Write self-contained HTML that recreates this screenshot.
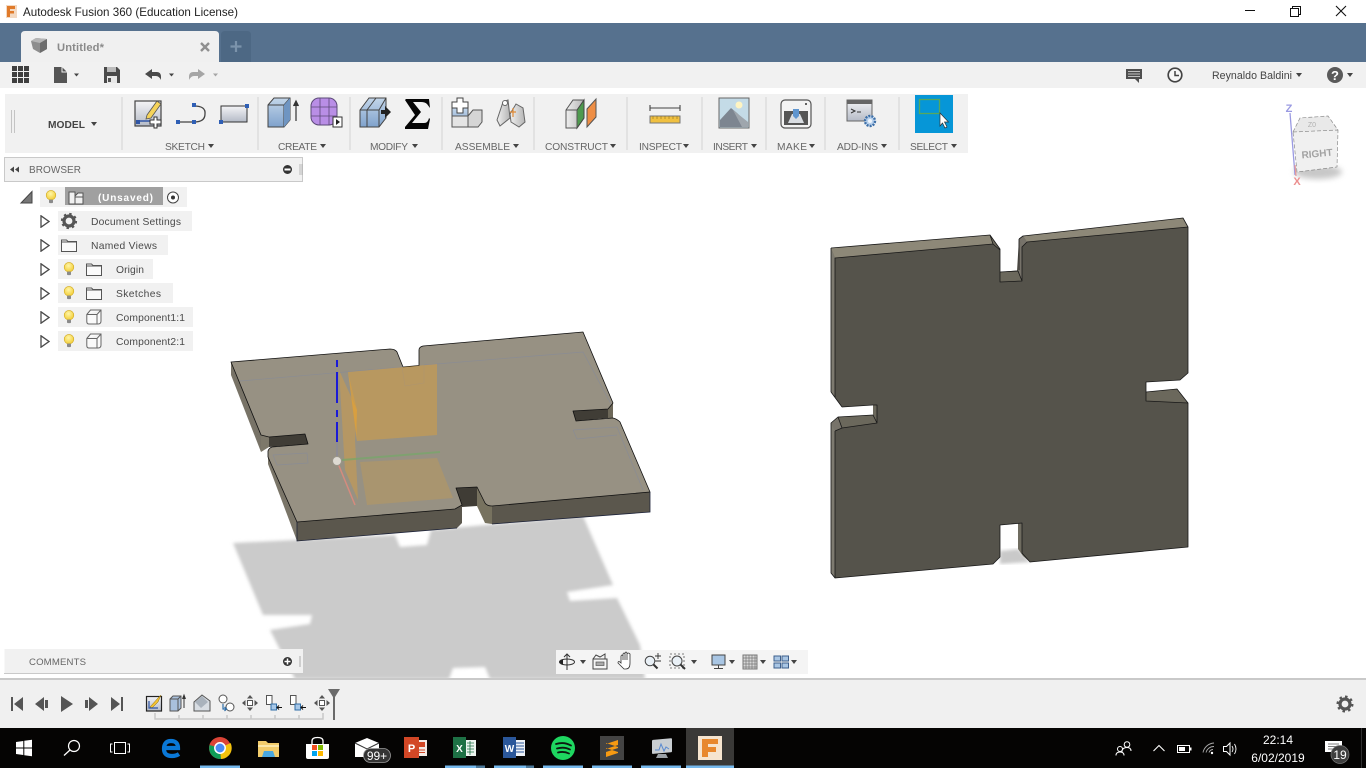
<!DOCTYPE html>
<html lang="en">
<head>
<meta charset="utf-8">
<title>Autodesk Fusion 360</title>
<style>
html,body{margin:0;padding:0;background:#fff;width:1366px;height:768px;overflow:hidden}
svg{display:block;position:absolute;left:0;top:0}
text{font-family:"Liberation Sans",Arial,sans-serif;fill:#555}
</style>
</head>
<body>
<svg width="1366" height="768" viewBox="0 0 1366 768" xmlns="http://www.w3.org/2000/svg">
<defs>
<filter id="b1" x="-5%" y="-5%" width="110%" height="110%"><feGaussianBlur stdDeviation="1.6"/></filter>
<filter id="b2" x="-30%" y="-30%" width="160%" height="160%"><feGaussianBlur stdDeviation="3"/></filter>
<linearGradient id="gw" x1="0" y1="0" x2="0" y2="1"><stop offset="0" stop-color="#f4f4f6"/><stop offset="1" stop-color="#b4bac6"/></linearGradient>
<linearGradient id="gb" x1="0" y1="0" x2="0" y2="1"><stop offset="0" stop-color="#c3d6ea"/><stop offset="1" stop-color="#7fa2cc"/></linearGradient>
<linearGradient id="gg" x1="0" y1="0" x2="1" y2="0"><stop offset="0" stop-color="#efefef"/><stop offset="1" stop-color="#b5b5b5"/></linearGradient>
<radialGradient id="gy" cx=".45" cy=".35" r=".7"><stop offset="0" stop-color="#fff6a8"/><stop offset="1" stop-color="#f1c92b"/></radialGradient>
<symbol id="bulb" viewBox="0 0 12 14" width="12" height="14">
<circle cx="6" cy="5.2" r="4.8" fill="url(#gy)" stroke="#d0a820" stroke-width=".6"/>
<rect x="4" y="9.5" width="4" height="3.6" rx="1" fill="#8a8a8a"/>
</symbol>
<symbol id="exp" viewBox="0 0 10 13" width="10" height="13">
<path d="M1 .8 L9 6.5 L1 12.2 Z" fill="#fff" stroke="#4a4a4a" stroke-width="1.3"/>
</symbol>
<symbol id="folder" viewBox="0 0 16 13" width="16" height="13">
<path d="M.5 12.5 V1 H5.5 L7 2.5 H15.5 V12.5 Z M.5 3 H15.5" fill="#fafafa" stroke="#555" stroke-width="1"/>
</symbol>
<symbol id="comp" viewBox="0 0 16 16" width="16" height="16">
<path d="M.8 5.5 L4.5 1 H15 V12 Q15 15 12 15 H3 Q.8 15 .8 12.5 Z M.8 5.5 H11 L15 1 M11 5.5 V15" fill="#fafafa" stroke="#666" stroke-width="1"/>
</symbol>
<symbol id="mv" viewBox="0 0 16 16" width="16" height="16">
<g fill="#555"><path d="M8 0 L11 3.5 H5 Z M8 16 L11 12.5 H5 Z M0 8 L3.5 5 V11 Z M16 8 L12.5 5 V11 Z"/></g>
<rect x="5.5" y="5.5" width="5" height="5" fill="#fff" stroke="#555" stroke-width="1"/>
</symbol>
<symbol id="join" viewBox="0 0 16 16" width="16" height="16">
<rect x=".5" y=".5" width="5.5" height="9" fill="#fff" stroke="#555"/>
<rect x="5" y="9" width="5.5" height="6" fill="#a8c8e8" stroke="#2f6ea8"/>
<path d="M16 12.5 H11 M13 10.5 L11 12.5 L13 14.5" stroke="#111" fill="none"/>
</symbol>
</defs>

<!-- Title bar -->
<rect width="1366" height="23" fill="#fff"/>
<rect x="6" y="5" width="11" height="13" fill="#f3d9c2"/>
<path d="M7 6 H15 V9 H10 V11 H14 V13.500 H10 V17 H7 Z" fill="#e07a2a"/>
<text x="23" y="16" font-size="11.600" style="fill:#222" textLength="215">Autodesk Fusion 360 (Education License)</text>
<path d="M1245 10.500 H1255" stroke="#111"/>
<path d="M1290.500 8.500 H1298.500 V16.500 H1290.500 Z M1292.500 8.500 V6.500 H1300.500 V14.500 H1298.500" fill="none" stroke="#111"/>
<path d="M1336 6 L1346 16 M1346 6 L1336 16" stroke="#111" stroke-width="1.100"/>

<!-- Tab strip -->
<rect y="23" width="1366" height="39" fill="#56718e"/>
<path d="M21 62 V35 Q21 31 25 31 H215 Q219 31 219 35 V62 Z" fill="#f0f0f0"/>
<path d="M221 62 V35 Q221 31 225 31 H247 Q251 31 251 35 V62 Z" fill="#4d6884"/>
<path d="M236 41 V52 M230.500 46.500 H241.500" stroke="#7b93ab" stroke-width="2.200"/>
<path d="M31 41 L36 38 L47 39 L47 49 L40 53 L33 49 Z" fill="#8d8d8d"/>
<path d="M31 41 L40 43 L47 39 L36 38 Z" fill="#b5b5b5"/>
<path d="M40 43 V53 L47 49 V39 Z" fill="#6d6d6d"/>
<text x="57" y="51" font-size="11.200" font-weight="bold" style="fill:#8a8a8a" textLength="47">Untitled*</text>
<path d="M201 43 L209 51 M209 43 L201 51" stroke="#8f8f8f" stroke-width="2.400"/>

<!-- Quick access row -->
<rect y="62" width="1366" height="26" fill="#f1f1f1"/>
<g fill="#3f3f3f">
<rect x="12" y="66" width="5" height="5"/><rect x="18" y="66" width="5" height="5"/><rect x="24" y="66" width="5" height="5"/>
<rect x="12" y="72" width="5" height="5"/><rect x="18" y="72" width="5" height="5"/><rect x="24" y="72" width="5" height="5"/>
<rect x="12" y="78" width="5" height="5"/><rect x="18" y="78" width="5" height="5"/><rect x="24" y="78" width="5" height="5"/>
</g>
<path d="M54 67 H62 L67 72 V83 H54 Z" fill="#555"/><path d="M62 67 V72 H67" fill="none" stroke="#f1f1f1"/>
<path d="M74 73.500 H79 L76.500 76.500 Z" fill="#444"/>
<path d="M104 67 H117 L120 70 V83 H104 Z" fill="#4a4a4a"/><rect x="107" y="67" width="9" height="5" fill="#bbb"/><rect x="107" y="76" width="10" height="7" fill="#e8e8e8"/><rect x="108" y="78" width="3" height="4" fill="#555"/>
<path d="M145 74 L152 69 V72 H157 Q161 72 161 77 V80 Q159 76 156 76 H152 V79 Z" fill="#4a4a4a"/>
<path d="M169 73.500 H174 L171.500 76.500 Z" fill="#444"/>
<path d="M205 74 L198 69 V72 H193 Q189 72 189 77 V80 Q191 76 194 76 H198 V79 Z" fill="#a5a5a5"/>
<path d="M213 73.500 H218 L215.500 76.500 Z" fill="#a5a5a5"/>
<path d="M1126 69 H1142 V79 H1139 V83 L1135 79 H1126 Z" fill="#4f4f4f"/><path d="M1128 71.500 H1140 M1128 74 H1140 M1128 76.500 H1140" stroke="#e6e6e6" stroke-width=".8"/>
<circle cx="1175" cy="75" r="6.800" fill="#f8f8f8" stroke="#444" stroke-width="1.700"/><path d="M1175 71 V75.500 H1179" fill="none" stroke="#444" stroke-width="1.500"/>
<text x="1212" y="79" font-size="10.600" textLength="80" style="fill:#444">Reynaldo Baldini</text>
<path d="M1296 73 H1302 L1299 77 Z" fill="#444"/>
<circle cx="1335" cy="75" r="8" fill="#5a5a5a"/><text x="1335" y="80" text-anchor="middle" font-size="13" font-weight="bold" style="fill:#fff">?</text>
<path d="M1347 73 H1353 L1350 77 Z" fill="#444"/>

<!-- Viewport shadow -->
<path d="M233 543 L263 615 L312 615 L310 624 L270 630 L295 679 H449 L453 668 L485 667 L490 679 H645 L640 645 L617 598 L570 601 L567 592 L613 585 L583 516 L463 527 L431 530 L427 545 L400 547 L395 535 Z" fill="#cbcbcb" filter="url(#b1)"/>

<!-- Left plate -->
<path d="M231 362 V375 L261 452 V435 Z" fill="#787367"/>
<path d="M261 435 L269 437 V447 L261 452 Z" fill="#7d786a"/>
<path d="M269 437 L305 434 L308 444 L269 447 Z" fill="#403d36"/>
<path d="M268 451 V464 L297 541 V522 Z" fill="#7a7568"/>
<path d="M297 522 V541 L457 528 L462 523 V505 L455 509 Z" fill="#5b574d"/>
<path d="M456 488 L477 487 V506 L462 507 Z" fill="#3f3c35"/>
<path d="M477 487 V506 L485 523 L492 524 V506 L485 503 Z" fill="#77725f"/>
<path d="M492 506 V524 L650 512 V492 Z" fill="#5b574d"/>
<path d="M419 350 V365 L423 365 Z" fill="#6b675a"/>
<path d="M573 411 L608 409 V418 L576 421 Z" fill="#403d36"/>
<path d="M608 409 L613 403 V418 H608 Z" fill="#6d6859"/>
<path d="M231 362 L390 349 Q395 349 397 352 L403 367 L419 365.500 V350 Q419 347 423 346 L583 332 L613 403 L608 409 L573 411 L576 421 L613 418 Q617 419 620 422 L650 492 L492 506 Q487 506 485 503 L477 487 L456 488 L462 505 L455 509 L297 522 L268 457 V451 Q269 448 272 447 L308 444 L305 434 L269 437 L261 435 Z" fill="#979183" stroke="#111" stroke-width=".8" stroke-linejoin="round"/>
<path d="M297 522 V541 L457 528 M492 524 L650 512 V492" fill="none" stroke="#1c2238" stroke-width=".8"/>
<g fill="none" stroke="#8a8c94" stroke-width=".7">
<path d="M240 381 L403 367 M424 365 L583 352 L611 404"/>
<path d="M402 367 L405 386 L424 383 V365"/>
<path d="M273 455 L307 453 L308 463 L277 465 Z"/>
<path d="M573 430 L617 427 L643 490 M573 430 L577 439 L617 435"/>
</g>
<!-- Origin planes -->
<path d="M348 372 L437 364 V435 L357 441 Z" fill="#f5a623" opacity=".36"/>
<path d="M360 462 L437 458 L453 498 L367 505 Z" fill="#f5a623" opacity=".2"/>
<path d="M339 370 L357 410 L355 440 L358 500 L345 470 Z" fill="#f5a623" opacity=".32"/>
<path d="M348 372 L357 410 V441 Z" fill="#f5a623" opacity=".3"/>
<path d="M337 461 L355 505" stroke="#d58b7e" stroke-width="1.500"/>
<path d="M342 460 L440 452" stroke="#76a868" stroke-width="2" opacity=".7"/>
<path d="M337 442 V458" stroke="#8a8a98" stroke-width="1.500"/>
<path d="M337 360 V367 M337 372 V403 M337 410 V417 M337 422 V442" stroke="#1a1ad8" stroke-width="2"/>
<circle cx="337" cy="461" r="4.500" fill="#dedad2" stroke="#9a968a"/>

<!-- Right plate -->
<path d="M1000 551 L1018 549 L1030 562 L1000 564 Z" fill="#c9c9c9" filter="url(#b1)"/>
<path d="M831 248 L990 235 L1000 249 V272 L1017 270.500 L1019 239 L1023 236 L1183 218 L1188 227 V373 L1180 380 L1146 382 V392 L1177 389 L1188 403 V547 L1030 562 L1022 553 V523 L1018 523 L1000 525 V557 L993 564 L835 578 L831 573 V423 L838 417 L873 415 V405 L842 407 L831 392 Z" fill="#55534b"/>
<path d="M831 248 L835 258 V397 L842 407 L831 392 Z" fill="#7d7a70"/>
<path d="M831 423 L835 428 V578 L831 573 Z" fill="#7d7a70"/>
<path d="M831 248 L990 235 L1000 250 L993 244 L835 258 Z" fill="#8d8878"/>
<path d="M993 244 L990 235 L1000 249 V250 Z" fill="#6e6a5d"/>
<path d="M1023 236 L1183 218 L1188 227 L1027 242 Z" fill="#8d8878"/>
<path d="M1019 239 L1023 236 L1027 242 L1022 247 Z" fill="#77736a"/>
<path d="M1019 239 L1022 247 V281 L1018 271 Z" fill="#77736a"/>
<path d="M1000 272 L1018 271 L1022 281 L1000 282 Z" fill="#6b685c"/>
<path d="M838 417 L873 415 L877 423 L842 428 Z" fill="#6b685c"/>
<path d="M831 423 L838 417 L842 428 L835 431 Z" fill="#77736a"/>
<path d="M873 405 H877 V423 L873 415 Z" fill="#6b685c"/>
<path d="M1146 392 L1177 389 L1188 403 L1146 401 Z" fill="#6b685c"/>
<path d="M1018 523 H1022 V553 L1030 562 L1023 556 L1018 549 Z" fill="#6f6c60"/>
<g fill="none" stroke="#181818" stroke-width=".8" stroke-linejoin="round">
<path d="M831 248 L990 235 L1000 249 V272 M1000 250 L993 244 L835 258 V397 M990 235 L993 244"/>
<path d="M1019 239 L1023 236 L1183 218 L1188 227 V373 L1180 380 L1146 382 V401 L1188 403 V547 L1030 562 L1022 553 V523 L1000 525 V557 L993 564 L835 578 L831 573 V423 L838 417 L873 415 L877 423 V405 L873 405"/>
<path d="M1027 242 L1188 227 M1027 242 L1022 247 V281 L1000 282 V272 M1000 272 L1018 271 L1022 281 M1019 239 V270"/>
<path d="M838 417 L842 428 L877 423 M835 431 L842 428 M835 431 V578 M1146 392 L1177 389 L1188 403 M842 407 L873 405 M831 392 L842 407"/>
<path d="M831 248 V392"/>
</g>

<!-- Ribbon -->
<rect x="5" y="94" width="963" height="59" fill="#f1f1f1"/>
<path d="M11.500 110 V133 M14.500 110 V133" stroke="#c4c4c4"/>
<text x="48" y="128" font-size="10.200" font-weight="bold" textLength="37" style="fill:#444">MODEL</text>
<path d="M91 122 H97 L94 126 Z" fill="#444"/>
<g stroke="#dddddd" stroke-width="1.500">
<path d="M122 97 V150 M258 97 V150 M350 97 V150 M442 97 V150 M534 97 V150 M627 97 V150 M702 97 V150 M766 97 V150 M825 97 V150 M899 97 V150"/>
</g>
<g font-size="10.200">
<text x="165" y="150" textLength="40" style="fill:#666">SKETCH</text>
<text x="278" y="150" textLength="39" style="fill:#666">CREATE</text>
<text x="370" y="150" textLength="38" style="fill:#666">MODIFY</text>
<text x="455" y="150" textLength="55" style="fill:#666">ASSEMBLE</text>
<text x="545" y="150" textLength="63" style="fill:#666">CONSTRUCT</text>
<text x="639" y="150" textLength="43" style="fill:#666">INSPECT</text>
<text x="713" y="150" textLength="35" style="fill:#666">INSERT</text>
<text x="777" y="150" textLength="30" style="fill:#666">MAKE</text>
<text x="837" y="150" textLength="41" style="fill:#666">ADD-INS</text>
<text x="910" y="150" textLength="38" style="fill:#666">SELECT</text>
</g>
<g fill="#444">
<path d="M208 144 H214 L211 148 Z M320 144 H326 L323 148 Z M412 144 H418 L415 148 Z M513 144 H519 L516 148 Z M610 144 H616 L613 148 Z M683 144 H689 L686 148 Z M751 144 H757 L754 148 Z M809 144 H815 L812 148 Z M881 144 H887 L884 148 Z M951 144 H957 L954 148 Z"/>
</g>
<!-- sketch create -->
<rect x="135" y="101" width="26" height="25" fill="url(#gw)" stroke="#444" stroke-width="1.200"/>
<path d="M138 123 V121 H150" stroke="#2f55a5" stroke-width="1.600" fill="none"/>
<rect x="136" y="120" width="4" height="4" fill="#2f55a5"/>
<path d="M147 115 L157 101 L161 104 L151 118 L146 119 Z" fill="#f5d35a" stroke="#555" stroke-width=".8"/>
<path d="M154 117 H157 V120 H161 V124 H157 V128 H154 V124 H150 V120 H154 Z" fill="#fff" stroke="#333" stroke-width="1"/>
<!-- line -->
<path d="M178 122 H194 M194 106 Q206 106 205 114 Q205 122 194 122" fill="none" stroke="#444" stroke-width="1.300"/>
<rect x="176" y="120" width="4" height="4" fill="#2f5fb5"/><rect x="192" y="120" width="4" height="4" fill="#2f5fb5"/><rect x="192" y="103" width="4" height="4" fill="#2f5fb5"/>
<!-- rectangle -->
<rect x="221" y="106" width="26" height="16" fill="url(#gw)" stroke="#333" stroke-width="1"/>
<rect x="245" y="104" width="4" height="4" fill="#2f5fb5"/><rect x="219" y="120" width="4" height="4" fill="#2f5fb5"/>
<!-- extrude -->
<path d="M268 105 L274 98 H290 V120 L284 127 H268 Z" fill="url(#gb)" stroke="#444"/>
<path d="M268 105 H284 L290 98 M284 105 V127" fill="none" stroke="#444"/>
<path d="M284 105 L290 98 V120 L284 127 Z" fill="#6f95c2"/>
<path d="M296 121 V103 M293.500 106 L296 101 L298.500 106" stroke="#333" stroke-width="1.200" fill="#333"/>
<!-- form -->
<rect x="311" y="98" width="26" height="27" rx="8" fill="#b98ee6" stroke="#5c4a78"/>
<path d="M311 107 H337 M311 116 H337 M320 98 V125 M329 98 V125" stroke="#5c4a78" stroke-width=".8"/>
<rect x="333" y="117" width="9" height="10" fill="#fff" stroke="#333"/><path d="M336 119 L340 122 L336 125 Z" fill="#222"/>
<!-- modify press pull -->
<path d="M360 110 L369 98 H386 V118 L379 127 H360 Z" fill="url(#gb)" stroke="#444"/>
<path d="M367 110 L376 98 M360 110 H379 M379 110 L386 98 M367 110 V127 M379 110 V127" fill="none" stroke="#444"/>
<path d="M381 110 H385 V106 L391 112 L385 118 V114 H381 Z" fill="#222"/>
<!-- sigma -->
<path d="M406 99 H429 L430 108 L427 104 Q425 102 421 102 H413 L421 112 L412 123 H424 Q428 123 429 118 L430 119 L428 129 H405 V127 L415 115 L405 100 Z" fill="#050505"/>
<!-- assemble -->
<rect x="452" y="108" width="16" height="19" fill="url(#gb)" stroke="#555"/>
<rect x="452" y="116" width="16" height="11" fill="#e4e4e4" stroke="#555"/>
<path d="M468 116 L473 110 H482 V122 L478 127 H468 Z" fill="#d5d5d5" stroke="#555"/>
<path d="M457 98 H463 V102 H468 V108 H463 V113 H457 V108 H452 V102 H457 Z" fill="#fff" stroke="#444"/>
<!-- joint -->
<path d="M497 120 L503 102 L508 100 L510 118 L500 126 Z" fill="url(#gg)" stroke="#666"/>
<path d="M510 114 L516 104 L523 108 L525 122 L519 127 L511 122 Z" fill="url(#gg)" stroke="#666"/>
<circle cx="505" cy="103" r="2.500" fill="#fff" stroke="#666"/>
<path d="M513 108 V117 M510 112 H516" stroke="#e08a35" stroke-width="1.200"/>
<!-- construct -->
<path d="M566 110 L573 100 H584 L584 118 L577 128 H566 Z" fill="url(#gg)" stroke="#555"/>
<path d="M577 110 L584 100 V118 L577 128 Z" fill="#4e9a4e" stroke="#444"/>
<path d="M566 110 H577 V128" fill="none" stroke="#555"/>
<path d="M587 127 V109 L596 99 V117 Z" fill="#ee8e45" stroke="#555"/>
<!-- inspect -->
<path d="M650 108 H680 M650 105 V111 M680 105 V111" stroke="#444" stroke-width="1.100" fill="none"/>
<rect x="650" y="116" width="30" height="7" fill="#f0c040" stroke="#777"/>
<path d="M653 116 V119 M657 116 V119 M661 116 V119 M665 116 V119 M669 116 V119 M673 116 V119 M677 116 V119" stroke="#9b7a1e" stroke-width=".7"/>
<!-- insert -->
<rect x="719" y="98" width="30" height="30" fill="#c4dbe7" stroke="#666"/>
<circle cx="739" cy="105" r="3.500" fill="#fff4c2"/>
<path d="M720 127 V120 L731 108 L737 113 L748 124 V127 Z" fill="#7d8590"/>
<path d="M733 110 L748 122 V127 H742 Z" fill="#9fa6ad"/>
<!-- make -->
<rect x="781" y="100" width="30" height="28" rx="4" fill="#f3f3f3" stroke="#555" stroke-width="1.200"/>
<rect x="784" y="111" width="24" height="14" fill="#555"/>
<path d="M788 123 L792 114 H800 L804 123 Z" fill="#d9dde2"/>
<path d="M793 109 H799 V116 L796 119 L793 116 Z" fill="#5f95cf"/>
<circle cx="806" cy="104" r="1" fill="#333"/>
<!-- add-ins -->
<rect x="847" y="100" width="25" height="21" fill="url(#gw)" stroke="#666"/>
<rect x="847" y="100" width="25" height="4" fill="#666"/>
<path d="M851 109 L855 111 L851 113 M857 112 H861" stroke="#333" fill="none"/>
<circle cx="870" cy="121" r="5" fill="#b7d0ec" stroke="#3d6fa8" stroke-width="2.400" stroke-dasharray="2 1.100"/>
<circle cx="870" cy="121" r="2" fill="#eef4fb"/>
<!-- select -->
<rect x="915" y="95" width="38" height="38" fill="#0696d7"/>
<rect x="919.500" y="99.500" width="20" height="14" fill="none" stroke="#57a85c" stroke-width="1.300"/>
<path d="M940 113 L948.500 122 H944.500 L947 127 L945 128 L942.500 123 L940 126 Z" fill="#fff" stroke="#333" stroke-width=".7"/>

<!-- ViewCube -->
<ellipse cx="1318" cy="172" rx="24" ry="7" fill="#9a9a9a" opacity=".55" filter="url(#b2)"/>
<path d="M1293 132 L1300 118 L1328 116 L1338 130 L1337 167 L1297 172 Z" fill="#f0f0f0"/>
<path d="M1293 132 L1300 118 L1328 116 L1338 130 Z" fill="#e9e9e9"/>
<path d="M1293 132 L1338 130 M1293 132 L1300 118 L1328 116 L1338 130 L1337 167 L1297 172 L1293 132" fill="none" stroke="#8c8c8c" stroke-width=".7" stroke-dasharray="4 2"/>
<text x="1317" y="157" text-anchor="middle" font-size="10" transform="rotate(-5 1317 153)" style="fill:#a2a2a2" font-weight="bold">RIGHT</text>
<text x="1312" y="127" text-anchor="middle" font-size="7" style="fill:#b0b0b0">Z0</text>
<path d="M1290 113 L1295 175" stroke="#9a9ae2" stroke-width="1.300"/>
<path d="M1295 165 L1296 176" stroke="#e59a9a" stroke-width="1.300"/>
<text x="1289" y="112" text-anchor="middle" font-size="11" font-weight="bold" style="fill:#9a9ae2">Z</text>
<text x="1297" y="185" text-anchor="middle" font-size="11" font-weight="bold" style="fill:#ec8f8f">X</text>

<!-- Browser -->
<rect x="4.500" y="157.500" width="298" height="24" fill="#f1f1f1" stroke="#c9c9c9"/>
<path d="M10 169.500 L14 166.500 V172.500 Z M15 169.500 L19 166.500 V172.500 Z" fill="#444"/>
<text x="29" y="173" font-size="10" textLength="52" style="fill:#666">BROWSER</text>
<circle cx="287.500" cy="169.500" r="4.500" fill="#333"/><rect x="284.500" y="168.500" width="6" height="2" fill="#fff"/>
<path d="M300 164 V175 M302 164 V175" stroke="#aaa" stroke-width=".8"/>

<rect x="40" y="187" width="147" height="20" fill="#f1f1f1"/>
<path d="M32 191.500 V203 H21 Z" fill="#777" stroke="#444"/>
<use href="#bulb" x="45" y="190"/>
<rect x="65" y="187" width="98" height="18" fill="#a0a0a0"/>
<path d="M69 192 H75 V196 L78 193 H83 V204 H69 Z M75 196 V204 M75 197 H83" fill="#f1f1f1" stroke="#555"/>
<text x="98" y="201" font-size="10" font-weight="bold" textLength="55" style="fill:#fff">(Unsaved)</text>
<circle cx="173" cy="197.500" r="5.500" fill="#fff" stroke="#444"/><circle cx="173" cy="197.500" r="2" fill="#333"/>

<g fill="#f1f1f1">
<rect x="58" y="211" width="134" height="20"/>
<rect x="58" y="235" width="110" height="20"/>
<rect x="58" y="259" width="95" height="20"/>
<rect x="58" y="283" width="115" height="20"/>
<rect x="58" y="307" width="135" height="20"/>
<rect x="58" y="331" width="135" height="20"/>
</g>
<use href="#exp" x="40" y="215"/><use href="#exp" x="40" y="239"/><use href="#exp" x="40" y="263"/><use href="#exp" x="40" y="287"/><use href="#exp" x="40" y="311"/><use href="#exp" x="40" y="335"/>
<circle cx="69" cy="221" r="5" fill="none" stroke="#555" stroke-width="3.200"/>
<circle cx="69" cy="221" r="7" fill="none" stroke="#555" stroke-width="2.200" stroke-dasharray="2.400 3.100"/>
<use href="#folder" x="61" y="239"/>
<use href="#bulb" x="63" y="262"/><use href="#folder" x="86" y="263"/>
<use href="#bulb" x="63" y="286"/><use href="#folder" x="86" y="287"/>
<use href="#bulb" x="63" y="310"/><use href="#comp" x="86" y="309"/>
<use href="#bulb" x="63" y="334"/><use href="#comp" x="86" y="333"/>
<g font-size="10.300">
<text x="91" y="225" textLength="90" style="fill:#4a4a4a">Document Settings</text>
<text x="91" y="249" textLength="66" style="fill:#4a4a4a">Named Views</text>
<text x="116" y="273" textLength="28" style="fill:#4a4a4a">Origin</text>
<text x="116" y="297" textLength="45" style="fill:#4a4a4a">Sketches</text>
<text x="116" y="321" textLength="69" style="fill:#4a4a4a">Component1:1</text>
<text x="116" y="345" textLength="69" style="fill:#4a4a4a">Component2:1</text>
</g>

<!-- Comments -->
<rect x="4.500" y="649" width="298.500" height="24" fill="#f1f1f1"/>
<path d="M4 673.500 H303" stroke="#c9c9c9"/>
<text x="29" y="665" font-size="9.600" textLength="57" style="fill:#666">COMMENTS</text>
<circle cx="287.500" cy="661.500" r="4.500" fill="#333"/><path d="M284.500 661.500 H290.500 M287.500 658.500 V664.500" stroke="#fff" stroke-width="1.500"/>
<path d="M300 656 V667" stroke="#aaa"/>

<!-- Nav bar -->
<rect x="556" y="650" width="252" height="24" fill="#f4f4f4"/>
<g fill="none" stroke="#333" stroke-width="1">
<ellipse cx="567" cy="662" rx="7.500" ry="3"/>
<path d="M567 654 V670"/>
<path d="M564 657 L567 654 L570 657" />
</g>
<path d="M559 662 L563 659 V665 Z" fill="#222"/>
<path d="M580 660 H586 L583 664 Z" fill="#444"/>
<rect x="593" y="659" width="14" height="10" fill="#f5f5f5" stroke="#444"/><rect x="596" y="662" width="8" height="3.500" fill="#aaa" stroke="#555" stroke-width=".7"/><path d="M593 659 L596 655 L600 657 L605 654 V659" fill="none" stroke="#444"/>
<path d="M621 663 V656 Q622 654 623 656 V660 V654 Q624 652 625 654 V660 V653 Q626 651 627 653 V660 V654 Q628 652 630 654 V663 Q630 669 626 669 H624 L618 663 Q618 660 621 663 Z" fill="#fff" stroke="#333" stroke-width=".8"/>
<circle cx="650" cy="661" r="4.800" fill="#e9f0f6" stroke="#444"/><path d="M653.500 664.500 L657.500 668.500" stroke="#333" stroke-width="2"/><path d="M655 656 H661 M658 653 V659 M655 661 H661" stroke="#333" stroke-width=".9"/>
<rect x="670" y="654" width="14" height="14" fill="none" stroke="#555" stroke-dasharray="2 2" stroke-width=".8"/>
<circle cx="677" cy="661" r="5" fill="#e9f0f6" stroke="#444"/><path d="M680.500 664.500 L685 669" stroke="#333" stroke-width="2"/>
<path d="M691 660 H697 L694 664 Z" fill="#444"/>
<rect x="712" y="655" width="13" height="10" fill="#a9c6e4" stroke="#444"/><path d="M718.500 665 V668 M714 668.500 H723" stroke="#444"/>
<path d="M729 660 H735 L732 664 Z" fill="#444"/>
<rect x="743" y="655" width="14" height="14" fill="#d8d8d8" stroke="#777"/>
<path d="M746 655 V669 M749 655 V669 M752 655 V669 M755 655 V669 M743 658 H757 M743 661 H757 M743 664 H757 M743 667 H757" stroke="#777" stroke-width=".7"/>
<path d="M760 660 H766 L763 664 Z" fill="#444"/>
<g fill="#a9c6e4" stroke="#3d5f8c"><rect x="774" y="656" width="6.500" height="5"/><rect x="782" y="656" width="6.500" height="5"/><rect x="774" y="663" width="6.500" height="5"/><rect x="782" y="663" width="6.500" height="5"/></g>
<path d="M791 660 H797 L794 664 Z" fill="#444"/>

<!-- Timeline -->
<rect y="678" width="1366" height="2" fill="#c9c9c9"/>
<rect y="680" width="1366" height="48" fill="#f0f0f0"/>
<g fill="#555">
<path d="M11 697 H13 V711 H11 Z M23 697 V711 L14 704 Z"/>
<path d="M35 704 L44 697 V711 Z M45 700 H48 V708 H45 Z"/>
<path d="M61 696 L73 704 L61 712 Z"/>
<path d="M98 704 L89 697 V711 Z M88 700 H85 V708 H88 Z"/>
<path d="M111 697 L120 704 L111 711 Z M121 697 H123 V711 H121 Z"/>
</g>
<path d="M155 713 V719 H323 V713 M179 715 V719 M203 715 V719 M227 715 V719 M251 715 V719 M275 715 V719 M299 715 V719" fill="none" stroke="#c8c8c8" stroke-width="1.500"/>
<rect x="146.500" y="696.500" width="15" height="14.500" fill="url(#gw)" stroke="#222" stroke-width="1.200"/>
<path d="M150 707 L158 698 L161 695 L158 702 L152 708 Z" fill="#f2c230" stroke="#8a6a10" stroke-width=".5"/>
<path d="M149 701 V708 H158" fill="none" stroke="#2f55a5" stroke-width="1.200"/>
<path d="M170 699 L173 696 H181 V708 L178 711 H170 Z" fill="#a9c0dc" stroke="#555"/><path d="M170 699 H178 V711 M178 699 L181 696" fill="none" stroke="#555"/>
<path d="M184 708 V697 M182.500 699 L184 695 L185.500 699" stroke="#333" fill="#333"/>
<path d="M194 702 L202 695 L210 701 V711 H194 Z" fill="#d8dde3" stroke="#555"/><path d="M195 702 L202 696 L208 702 L201 708 Z" fill="#a9b2bc"/>
<circle cx="223" cy="699" r="4" fill="#fff" stroke="#555"/><circle cx="230" cy="707" r="4" fill="#fff" stroke="#555"/>
<path d="M223 704 V709 H226 M224.500 707 L226.500 709 L224.500 711" fill="none" stroke="#2f6ea8" stroke-width="1.200"/>
<use href="#mv" x="242" y="695"/>
<use href="#join" x="266" y="695"/>
<use href="#join" x="290" y="695"/>
<use href="#mv" x="314" y="695"/>
<path d="M328 689 H340 L335 697 V720 H333 V697 Z" fill="#6a6a6a"/>
<circle cx="1345" cy="704" r="5" fill="none" stroke="#555" stroke-width="3.200"/>
<circle cx="1345" cy="704" r="7.300" fill="none" stroke="#555" stroke-width="2.400" stroke-dasharray="2.500 3.200"/>

<!-- Taskbar -->
<rect y="728" width="1366" height="40" fill="#050403"/>
<rect x="686" y="728" width="48" height="40" fill="#3a3937"/>
<path d="M1361.500 728 V768" stroke="#2f2f2f"/>
<g fill="#fff">
<path d="M16 742 L23.300 741 V747.500 H16 Z M24.300 740.800 L32 739.800 V747.500 H24.300 Z M16 748.500 H23.300 V755 L16 754 Z M24.300 748.500 H32 V756.200 L24.300 755.200 Z"/>
</g>
<circle cx="74" cy="746" r="5.500" fill="none" stroke="#fff" stroke-width="1.200"/><path d="M70 750 L64 755.500" stroke="#fff" stroke-width="1.300"/>
<path d="M114.500 742.500 H125.500 V753.500 H114.500 Z M112.500 744 H110.500 V752 H112.500 M127.500 744 H129.500 V752 H127.500" fill="none" stroke="#fff"/>
<path d="M165 748 H178 Q178 741 171 741 Q164 741 164 749 Q164 756 172 756 Q176 756 179 754" fill="none" stroke="#0a78d7" stroke-width="4.200"/>
<circle cx="220" cy="748" r="11" fill="#db4437"/>
<path d="M220 748 L209.500 745 A11 11 0 0 0 221 759 Z" fill="#0f9d58"/>
<path d="M220 748 L221 759 A11 11 0 0 0 230.500 743 Z" fill="#f4c20d"/>
<circle cx="220" cy="748" r="5.200" fill="#4a8af4" stroke="#fff" stroke-width="1.500"/>
<path d="M258 741 H266 L268 743 H279 V757 H258 Z" fill="#f2cc6b"/><rect x="258" y="745" width="21" height="2" fill="#fbe7a8"/><path d="M262 757 L264 751 H273 L275 757 Z" fill="#4aa8e0"/>
<path d="M306 744 H329 V757 Q329 759 327 759 H308 Q306 759 306 757 Z" fill="#fff"/><path d="M312 744 V741 Q312 737.500 317.500 737.500 Q323 737.500 323 741 V744" fill="none" stroke="#fff" stroke-width="1.300"/>
<rect x="312" y="745" width="5" height="5" fill="#f25022"/><rect x="318" y="745" width="5" height="5" fill="#7fba00"/><rect x="312" y="751" width="5" height="5" fill="#00a4ef"/><rect x="318" y="751" width="5" height="5" fill="#ffb900"/>
<path d="M355 743 L367 738 L379 743 V757 H355 Z" fill="#fff"/><path d="M355 743 L367 749 L379 743" fill="none" stroke="#333"/>
<rect x="363.500" y="748.500" width="27" height="14" rx="7" fill="#343434" stroke="#9a9a9a" stroke-width=".8"/>
<text x="377" y="760" text-anchor="middle" font-size="12" style="fill:#fff">99+</text>
<rect x="417" y="740" width="10" height="16" fill="#f4e9e4"/><rect x="419" y="742" width="6" height="5" fill="#d24726"/><path d="M419 750 H425 M419 752.500 H425" stroke="#d24726"/>
<rect x="404" y="737" width="15" height="21" fill="#d24726"/><text x="411.500" y="752" text-anchor="middle" font-size="11" font-weight="bold" style="fill:#fff">P</text>
<rect x="465" y="740" width="11" height="16" fill="#eef5f0"/><path d="M467 743 H474 M467 746 H474 M467 749 H474 M467 752 H474 M470 741 V755" stroke="#1e7145" stroke-width=".8"/>
<rect x="453" y="737" width="13" height="21" fill="#1e7145"/><text x="459.500" y="752" text-anchor="middle" font-size="10" font-weight="bold" style="fill:#fff">X</text>
<rect x="515" y="740" width="10" height="16" fill="#eef2f8"/><path d="M516 743 H524 M516 746 H524 M516 749 H524 M516 752 H524" stroke="#2b579a"/>
<rect x="503" y="737" width="13" height="21" fill="#2b579a"/><text x="509.500" y="752" text-anchor="middle" font-size="10" font-weight="bold" style="fill:#fff">W</text>
<circle cx="563" cy="748" r="12" fill="#1ed760"/>
<path d="M556 744 Q564 741.500 571 745.500 M557 748.500 Q564 746.500 570 749.500 M558 752.500 Q564 751 569 753.500" fill="none" stroke="#0c1a10" stroke-width="1.800" stroke-linecap="round"/>
<rect x="600" y="736" width="24" height="24" fill="#444"/>
<path d="M606 744 L618 740 V745 L606 749 Z M618 747 L606 743 V748 L618 752 Z M606 752 L618 748 V753 L606 757 Z" fill="#f79a12"/>
<rect x="652" y="740" width="20" height="14" rx="1" fill="#c9ced2" transform="skewY(-5) translate(0 57)"/>
<path d="M655 750 L659 750 L661 744 L664 751 L666 747 L669 749" fill="none" stroke="#5a8ad0"/>
<path d="M658 754 H666 L668 758 H656 Z" fill="#9aa0a5"/>
<rect x="698" y="736" width="24" height="24" fill="#f6e4cf"/>
<path d="M702 739 H718 V744 H708 V747 H716 V752 H708 V757 H702 Z" fill="#e8882e"/>
<g fill="#76b9ed">
<rect x="200" y="765.500" width="40" height="2.500"/><rect x="445" y="765.500" width="40" height="2.500"/><rect x="494" y="765.500" width="40" height="2.500"/><rect x="543" y="765.500" width="40" height="2.500"/><rect x="592" y="765.500" width="40" height="2.500"/><rect x="641" y="765.500" width="40" height="2.500"/><rect x="686" y="765.500" width="48" height="2.500"/>
</g>
<rect x="476" y="765.500" width="9" height="2.500" fill="#4c7899"/><rect x="526" y="765.500" width="8" height="2.500" fill="#4c7899"/>
<!-- Tray -->
<circle cx="1127" cy="744.500" r="2.800" fill="none" stroke="#fff"/><path d="M1122 752 Q1122 747.500 1127 747.500 Q1131 747.500 1131 751" fill="none" stroke="#fff"/>
<circle cx="1120" cy="749" r="2.500" fill="none" stroke="#fff"/><path d="M1116 755.500 Q1116 752 1120 752 Q1124 752 1124 755.500" fill="none" stroke="#fff"/>
<path d="M1153.500 751 L1159 745.500 L1164.500 751" fill="none" stroke="#fff" stroke-width="1.100"/>
<rect x="1177.500" y="745.500" width="12" height="7" fill="none" stroke="#fff"/><rect x="1179" y="747" width="6" height="4" fill="#fff"/><rect x="1190" y="747.500" width="1.500" height="3" fill="#fff"/>
<path d="M1203 752.500 A12 12 0 0 1 1214 743 M1206 752.500 A8 8 0 0 1 1214 746.500 M1209 752.500 A4.500 4.500 0 0 1 1213 749.500" fill="none" stroke="#aaa" stroke-width=".9"/>
<circle cx="1212" cy="753" r="1.200" fill="#fff"/>
<path d="M1223.500 746.500 H1226.500 L1230 743 V755 L1226.500 751.500 H1223.500 Z" fill="none" stroke="#fff"/>
<path d="M1232 746 Q1234 749 1232 752 M1234.500 744 Q1237.500 749 1234.500 754" fill="none" stroke="#fff" stroke-width=".9"/>
<text x="1278" y="744" text-anchor="middle" font-size="12" style="fill:#fff">22:14</text>
<text x="1278" y="762" text-anchor="middle" font-size="12" style="fill:#fff">6/02/2019</text>
<path d="M1325 741 H1342 V752 H1335 L1333 755 V752 H1325 Z" fill="#fff"/><path d="M1328 744 H1339 M1328 746.500 H1339 M1328 749 H1339" stroke="#555" stroke-width=".7"/>
<circle cx="1340" cy="754.500" r="9" fill="#3f3f3f" stroke="#777" stroke-width=".7"/>
<text x="1340" y="759" text-anchor="middle" font-size="12" style="fill:#fff">19</text>
</svg>
</body>
</html>
